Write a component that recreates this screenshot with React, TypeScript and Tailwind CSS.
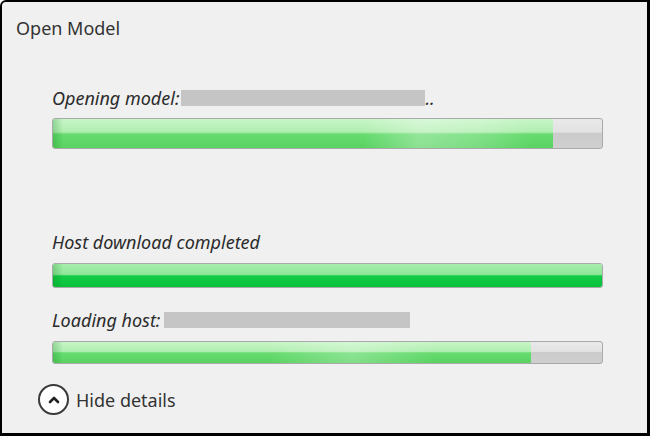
import type { ReactNode } from "react";

interface ProgressProps {
	value: number,
	height: string,
	done?: boolean,
	sheen?: string,
}

function ProgressBar({ value, height, done, sheen }: ProgressProps) {
	return (
		<div
			className={`relative w-[551px] ${height} rounded-[3px] border border-[#a9a9a9] overflow-hidden bg-[linear-gradient(to_bottom,#e9e9e9_0%,#e2e2e2_45%,#cbcbcb_50%,#cfcfcf_100%)]`}
		>
			<div
				className={`absolute left-0 top-0 bottom-0 ${
					done
						? "bg-[linear-gradient(to_bottom,#a6eeab_0%,#8fe79a_45%,#12cc45_52%,#0ac23c_100%)]"
						: "bg-[linear-gradient(to_bottom,#c7f5c7_0%,#b0eeb0_45%,#66db6f_52%,#5ad362_100%)]"
				}`}
				style={{ width: `${value}%` }}
			>
				{sheen && <div className={`absolute top-0 bottom-0 ${sheen}`} />}
				<div className="absolute left-0 top-0 bottom-0 w-[10px] bg-[linear-gradient(to_right,rgba(0,120,20,0.25),transparent)]" />
			</div>
		</div>
	);
}

function Label({ children }: { children: ReactNode }) {
	return (
		<div className="h-[22px] flex items-center text-[18px] italic text-[#2b2b2b] leading-none">
			{children}
		</div>
	);
}

function Redacted({ width }: { width: string }) {
	return <span className={`inline-block ${width} h-[16px] bg-[#c5c5c5] blur-[0.5px]`} />;
}

export default function App() {
	return (
		<div
			className="w-[650px] h-[436px] bg-[#f0f0f0] border-t-2 border-l-2 border-r-[3px] border-b-[3px] border-black rounded-tl-[6px] overflow-hidden flex flex-col"
			style={{ fontFamily: "'Noto Sans', 'Open Sans', sans-serif" }}
		>
			<div className="pt-[14px] pl-[14px]">
				<div className="h-[24px] flex items-center text-[18px] text-[#333] leading-none">Open Model</div>
			</div>

			<div className="pl-[50px] flex flex-col">
				<div className="mt-[47px]">
					<Label>
						Opening model:
						<Redacted width="w-[244px] ml-[1px]" />
						<span className="ml-[1px]">..</span>
					</Label>
				</div>
				<div className="mt-[9px]">
					<ProgressBar
						value={91}
						height="h-[31px]"
						sheen="left-[62%] w-[34%] bg-[linear-gradient(to_right,transparent,rgba(255,255,255,0.3),rgba(255,255,255,0.2),transparent)]"
					/>
				</div>

				<div className="mt-[82px]">
					<Label>Host download completed</Label>
				</div>
				<div className="mt-[10px]">
					<ProgressBar value={100} height="h-[25px]" done />
				</div>

				<div className="mt-[21px]">
					<Label>
						Loading host:
						<Redacted width="w-[246px] ml-[4px]" />
					</Label>
				</div>
				<div className="mt-[10px]">
					<ProgressBar
						value={87}
						height="h-[23px]"
						sheen="left-[45%] w-[35%] bg-[linear-gradient(to_right,transparent,rgba(255,255,255,0.25),transparent)]"
					/>
				</div>
			</div>

			<div className="mt-[20px] pl-[36px] flex items-center gap-[7px]">
				<div className="w-[31px] h-[31px] rounded-full border-2 border-[#3a3a3a] bg-white flex items-center justify-center">
					<svg width="14" height="14" viewBox="0 0 14 14">
						<path d="M3 9 L7 5 L11 9" fill="none" stroke="#222" strokeWidth="2.6" strokeLinecap="round" strokeLinejoin="round" />
					</svg>
				</div>
				<span className="text-[18px] text-[#333] leading-none">Hide details</span>
			</div>
		</div>
	);
}
